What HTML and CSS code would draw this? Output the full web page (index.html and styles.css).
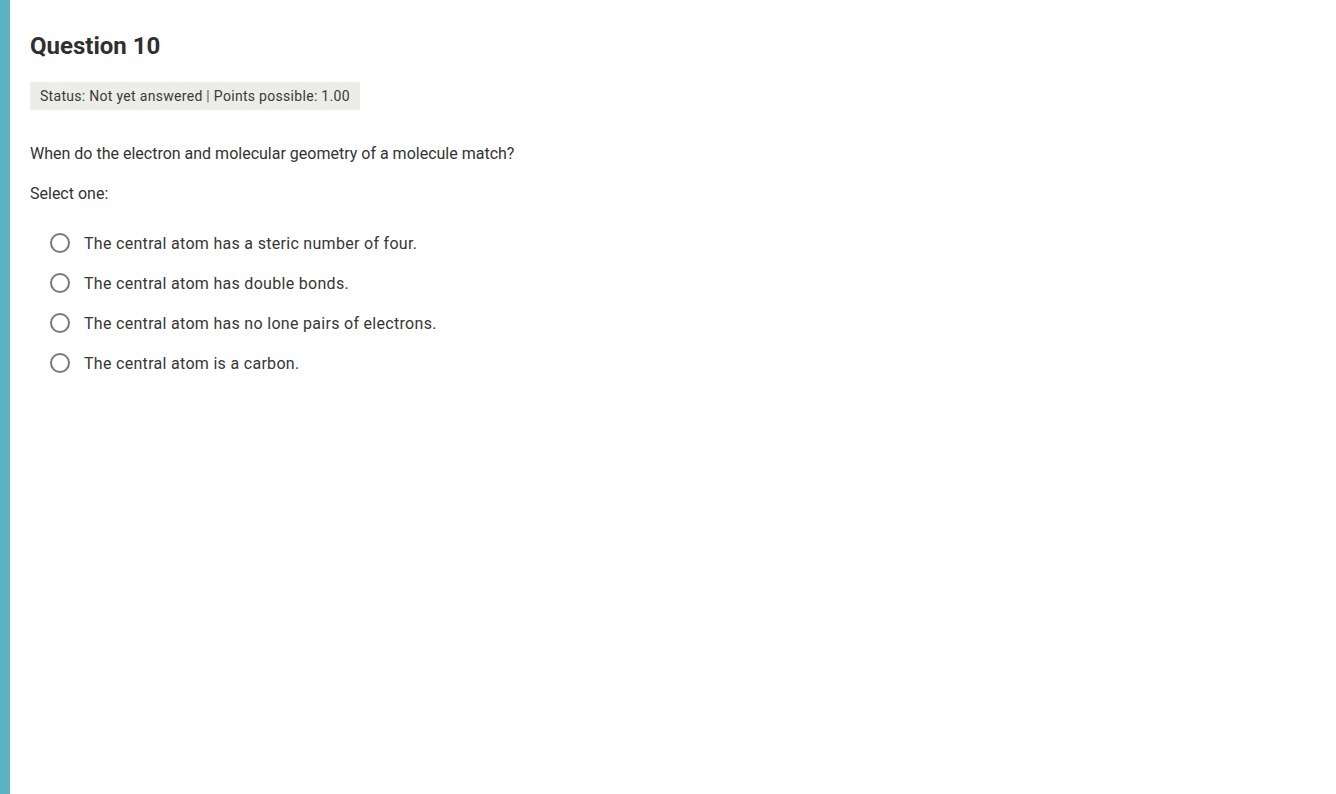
FILE: index.html
```html
<!DOCTYPE html>
<html lang="en">

<head>
    <meta charset="UTF-8">
    <title>Question 10</title>
    <link rel="stylesheet" href="styles.css">
</head>

<body>
    <div class="page">
        <div class="side-bar"></div>

        <div class="question">
            <h1>Question 10</h1>

            <div class="status">Status: Not yet answered <span class="sep">|</span> Points possible: 1.00</div>

            <p class="prompt">When do the electron and molecular geometry of a molecule match?</p>
            <p class="select">Select one:</p>

            <!-- Opciones -->
            <div class="options">
                <label class="option"><span class="radio"></span>The central atom has a steric number of four.</label>
                <label class="option"><span class="radio"></span>The central atom has double bonds.</label>
                <label class="option"><span class="radio"></span>The central atom has no lone pairs of electrons.</label>
                <label class="option"><span class="radio"></span>The central atom is a carbon.</label>
            </div>
        </div>
    </div>
</body>

</html>
```

FILE: styles.css
```css
body {
    font-family: Roboto, "Noto Sans", sans-serif;
    background-color: #ffffff;
    color: #333333;
    margin: 0;
    padding: 0;
}

.page {
    display: flex;
    min-height: 794px;
}

.side-bar {
    width: 10px;
    background-color: #5bb3c1;
    flex-shrink: 0;
}

.question {
    padding: 30px 20px 0 20px;
}

h1 {
    font-size: 24px;
    font-weight: 700;
    color: #2f2f2f;
    margin: 0;
    line-height: 32px;
}

.status {
    display: inline-block;
    margin-top: 20px;
    background-color: #ecede8;
    font-size: 14px;
    line-height: 28px;
    padding: 0 10px;
    letter-spacing: 0.3px;
    color: #3a3a3a;
}

.status .sep {
    color: #8a3d8a;
}

.prompt {
    font-size: 16px;
    margin: 34px 0 0 0;
    line-height: 20px;
}

.select {
    font-size: 16px;
    margin: 20px 0 0 0;
    line-height: 20px;
}

.options {
    margin-top: 19px;
    display: flex;
    flex-direction: column;
}

.option {
    display: flex;
    align-items: center;
    height: 40px;
    font-size: 16px;
    padding-left: 20px;
    letter-spacing: 0.3px;
    color: #363636;
}

.radio {
    width: 16px;
    height: 16px;
    border: 2px solid #777777;
    border-radius: 50%;
    margin-right: 14px;
    flex-shrink: 0;
}
```
